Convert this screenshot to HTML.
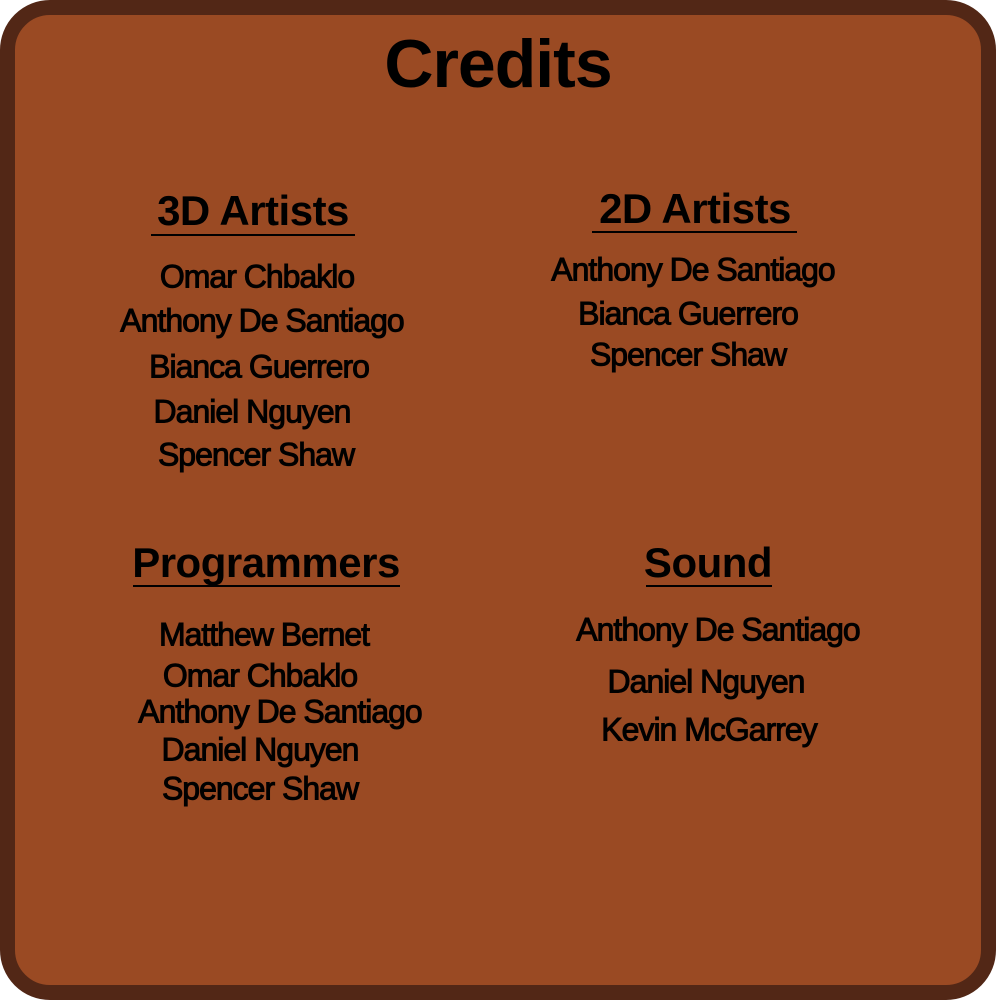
<!DOCTYPE html>
<html><head><meta charset="utf-8"><style>
html,body{margin:0;padding:0;background:#fff;width:996px;height:1000px;overflow:hidden}
.box{position:absolute;left:0;top:0;width:966px;height:970px;border:15px solid #522716;border-radius:50px;background:#9a4a23}
.t{position:absolute;transform:translate(-50%,-50%);white-space:nowrap;font-family:"Comic Sans MS","Liberation Sans",sans-serif;color:#000}
.n{font-size:32px;letter-spacing:-1px;font-weight:normal;-webkit-text-stroke:1px #000}
.h{font-size:42px;font-weight:bold;letter-spacing:-0.5px}
.u{position:absolute;height:1.5px;background:#000}
</style></head><body>
<div class="box"></div>
<div class="t" style="left:498px;top:64px;font-size:68px;font-weight:bold;letter-spacing:-1px">Credits</div>

<div class="t h" style="left:253px;top:211px">3D Artists</div>
<div class="u" style="left:151px;top:234px;width:204px"></div>
<div class="t n" style="left:257px;top:277px">Omar Chbaklo</div>
<div class="t n" style="left:262px;top:321px">Anthony De Santiago</div>
<div class="t n" style="left:259px;top:367px">Bianca Guerrero</div>
<div class="t n" style="left:252px;top:412px">Daniel Nguyen</div>
<div class="t n" style="left:256px;top:455px">Spencer Shaw</div>

<div class="t h" style="left:695px;top:209px">2D Artists</div>
<div class="u" style="left:592px;top:231px;width:205px"></div>
<div class="t n" style="left:693px;top:270px">Anthony De Santiago</div>
<div class="t n" style="left:688px;top:314px">Bianca Guerrero</div>
<div class="t n" style="left:688px;top:355px">Spencer Shaw</div>

<div class="t h" style="left:266px;top:563px">Programmers</div>
<div class="u" style="left:133px;top:585px;width:267px"></div>
<div class="t n" style="left:264px;top:635px">Matthew Bernet</div>
<div class="t n" style="left:260px;top:676px">Omar Chbaklo</div>
<div class="t n" style="left:280px;top:712px">Anthony De Santiago</div>
<div class="t n" style="left:260px;top:750px">Daniel Nguyen</div>
<div class="t n" style="left:260px;top:789px">Spencer Shaw</div>

<div class="t h" style="left:708px;top:563px">Sound</div>
<div class="u" style="left:646px;top:585px;width:126px"></div>
<div class="t n" style="left:718px;top:630px">Anthony De Santiago</div>
<div class="t n" style="left:706px;top:682px">Daniel Nguyen</div>
<div class="t n" style="left:709px;top:730px">Kevin McGarrey</div>
</body></html>
